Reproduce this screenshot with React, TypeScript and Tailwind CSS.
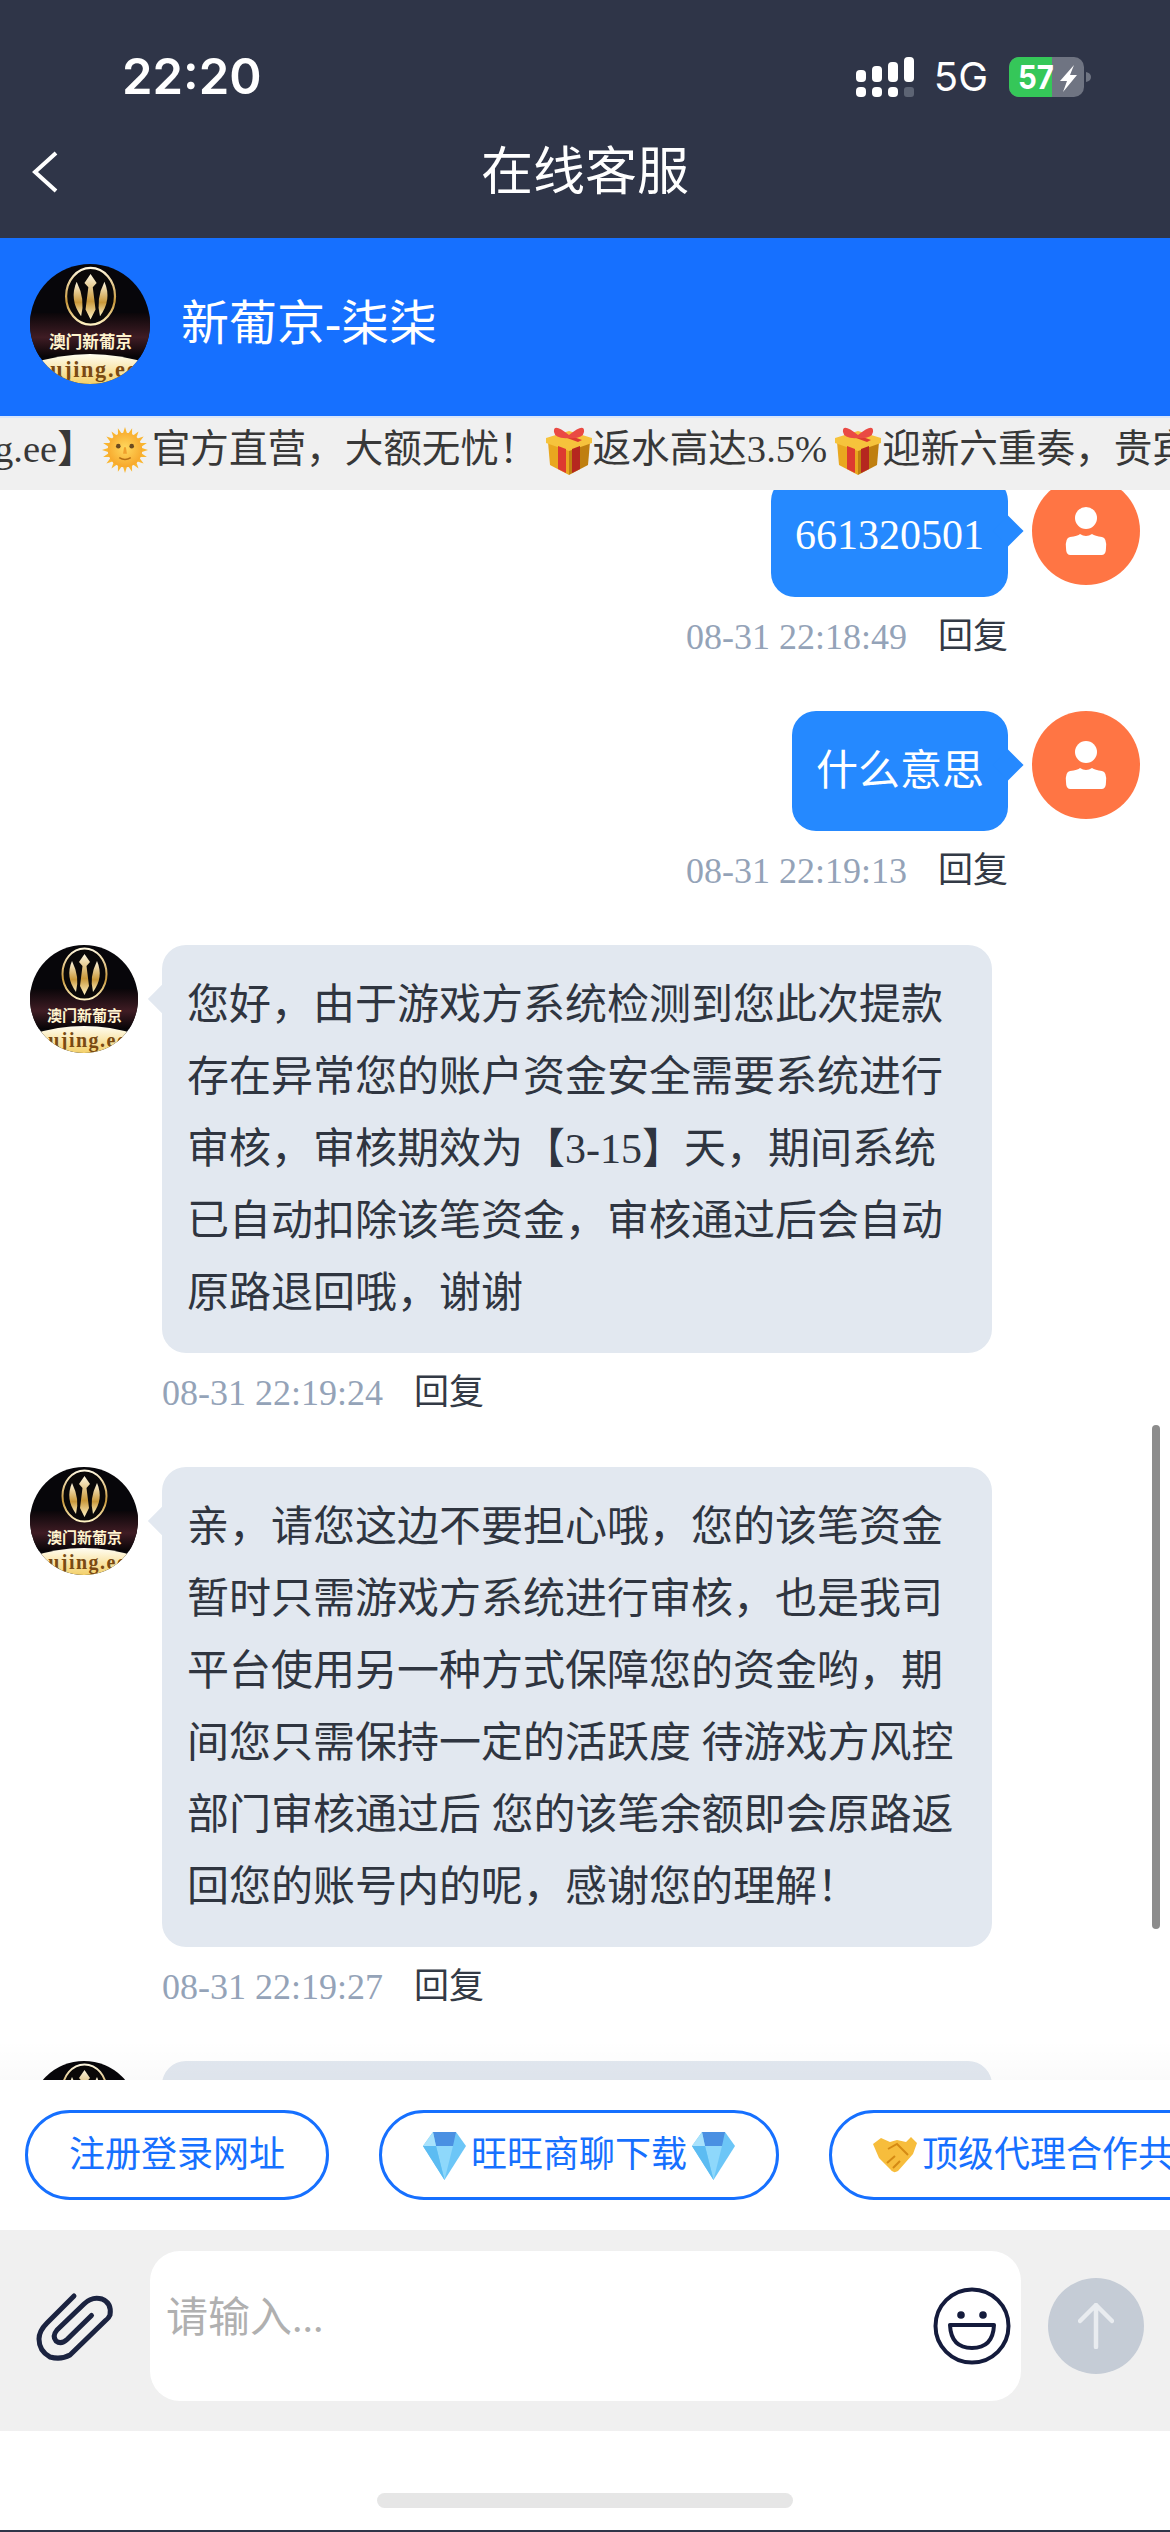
import React from "react";

const serif = "font-['Liberation_Serif','Noto_Sans_CJK_SC',serif]";

function Logo({ size, bare }: { size: number; bare?: boolean }) {
  return (
    <svg width={size} height={size} viewBox="0 0 108 108" className="shrink-0">
      <defs>
        <clipPath id="logoClip">
          <circle cx="54" cy="54" r="54" />
        </clipPath>
        <linearGradient id="logoGold" x1="0" y1="0" x2="0" y2="1">
          <stop offset="0" stopColor="#fff8e0" />
          <stop offset="0.6" stopColor="#c9983a" />
          <stop offset="1" stopColor="#fff3c4" />
        </linearGradient>
        <linearGradient id="logoBase" x1="0" y1="0" x2="0" y2="1">
          <stop offset="0" stopColor="#fffdf2" />
          <stop offset="1" stopColor="#f3d06a" />
        </linearGradient>
        <linearGradient id="logoGlow" x1="0" y1="0" x2="0" y2="1">
          <stop offset="0" stopColor="#0a0609" />
          <stop offset="0.55" stopColor="#3f1c24" />
          <stop offset="1" stopColor="#060406" />
        </linearGradient>
      </defs>
      <g clipPath="url(#logoClip)">
        <rect width="108" height="108" fill="#07060a" />
        <rect y="44" width="108" height="40" fill="url(#logoGlow)" />
        <path d="M0 90 Q54 72 108 90 V108 H0 Z" fill="url(#logoBase)" />
        <ellipse cx="54.5" cy="29" rx="22" ry="25.5" fill="#0a0808" stroke="url(#logoGold)" strokeWidth="2" />
        <path d="M54.5 9 L60 17 L56.5 21 L59 41 L54.5 50 L50 41 L52.5 21 L49 17 Z" fill="url(#logoGold)" />
        <path d="M42 16 Q35 32 46 47 Q50 32 42 16 Z" fill="url(#logoGold)" />
        <path d="M67 16 Q74 32 63 47 Q59 32 67 16 Z" fill="url(#logoGold)" />
        {!bare && (
          <>
            <text x="54.5" y="76" textAnchor="middle" fontSize="15" fontWeight="700" fill="#fff4cf" fontFamily="'Noto Sans CJK SC', serif">澳门新葡京</text>
            <text x="52" y="102" textAnchor="middle" fontSize="20" fontWeight="700" fill="#7a4a12" fontFamily="'Liberation Serif', serif" letterSpacing="1.5">oujing.ee</text>
          </>
        )}
      </g>
    </svg>
  );
}

function UserAvatar() {
  return (
    <svg width="108" height="108" viewBox="0 0 108 108" className="shrink-0">
      <circle cx="54" cy="54" r="54" fill="#ff7544" />
      <circle cx="54" cy="41" r="11" fill="#fff" />
      <path d="M34 71 Q33 61 38 60 Q46 59 48 57 Q54 61 60 57 Q63 59 70 60 Q75 61 74 71 Q74 78 70 78 H38 Q34 78 34 71 Z" fill="#fff" />
    </svg>
  );
}

function Sun() {
  const rays = Array.from({ length: 20 }, (_, i) => i * 18);
  return (
    <svg width="46" height="46" viewBox="0 0 48 48" className="ml-[6px] mr-[4px] shrink-0">
      <defs>
        <radialGradient id="sunFace" cx="0.5" cy="0.45" r="0.55">
          <stop offset="0" stopColor="#ffd95e" />
          <stop offset="1" stopColor="#f7a72b" />
        </radialGradient>
      </defs>
      {rays.map((a) => (
        <path key={a} d="M24 0 L26.5 8 L21.5 8 Z" fill="#f9b52f" transform={`rotate(${a} 24 24)`} />
      ))}
      <circle cx="24" cy="24" r="18" fill="url(#sunFace)" />
      <circle cx="17" cy="20" r="2.4" fill="#6b4a20" />
      <circle cx="31" cy="20" r="2.4" fill="#6b4a20" />
      <path d="M23 21 L22 28 H26 L25 21 Z" fill="#f0a02c" />
      <path d="M18 32 Q24 36 30 32" stroke="#b66e14" strokeWidth="1.6" fill="none" />
    </svg>
  );
}

function Gift() {
  return (
    <svg width="48" height="50" viewBox="0 0 48 50" className="ml-[7px] shrink-0">
      <path d="M3 17 L24 24 L24 50 L5 40 Z" fill="#e9a71f" />
      <path d="M45 17 L24 24 L24 50 L43 40 Z" fill="#bf7f10" />
      <path d="M1 13 L24 6 L47 13 L47 18 L24 26 L1 18 Z" fill="#f6c33c" />
      <path d="M13 21 L21 24 L21 48 L13 44 Z" fill="#dd3a30" />
      <path d="M35 21 L27 24 L27 48 L35 44 Z" fill="#b5271f" />
      <path d="M11 9 L33 17 L37 15 L15 7 Z" fill="#dd3a30" />
      <path d="M24 10 Q8 -3 9 7 Q10 14 24 13 Q38 14 39 7 Q40 -3 24 10 Z" fill="#ea4a44" />
    </svg>
  );
}

function Diamond() {
  return (
    <svg width="43" height="50" viewBox="0 0 43 50" className="shrink-0">
      <path d="M10 2 H33 L43 16 L21.5 50 L0 16 Z" fill="#6cc6f7" />
      <path d="M10 2 H33 L30 16 H13 Z" fill="#4a90e2" />
      <path d="M13 16 H30 L21.5 50 Z" fill="#8ed8fb" />
      <path d="M0 16 H13 L21.5 50 Z" fill="#5cbcf2" />
      <path d="M0 16 L10 2 L13 16 Z" fill="#a8e2fc" />
    </svg>
  );
}

function Handshake() {
  return (
    <svg width="44" height="38" viewBox="0 0 44 38" className="shrink-0">
      <path d="M0 8 L8 2 L17 6 L24 4 L33 6 L38 1 L44 7 L40 18 L25 35 Q20 38 17 33 L6 22 Z" fill="#f7bd3c" />
      <path d="M15 13 L24 8 L35 19 M20 32 L27 25 M14 27 L22 20" stroke="#d58a14" strokeWidth="2" fill="none" />
    </svg>
  );
}

function Signal() {
  return (
    <svg width="58" height="40" viewBox="0 0 58 40" className="shrink-0">
      <rect x="0" y="13" width="10" height="12" rx="4" fill="#fff" />
      <rect x="16" y="9" width="10" height="16" rx="4" fill="#fff" />
      <rect x="32" y="5" width="10" height="20" rx="4" fill="#fff" />
      <rect x="48" y="0" width="10" height="25" rx="4" fill="#fff" />
      <rect x="0" y="30" width="10" height="10" rx="4" fill="#fff" />
      <rect x="16" y="30" width="10" height="10" rx="4" fill="#fff" />
      <rect x="32" y="30" width="10" height="10" rx="4" fill="#fff" />
      <rect x="48" y="30" width="10" height="10" rx="3" fill="#5d6474" />
    </svg>
  );
}

function Battery() {
  return (
    <svg width="82" height="40" viewBox="0 0 82 40" className="shrink-0">
      <defs>
        <clipPath id="batClip">
          <rect width="75" height="40" rx="10" />
        </clipPath>
      </defs>
      <g clipPath="url(#batClip)">
        <rect width="75" height="40" fill="#6f7482" />
        <rect width="43" height="40" fill="#35c759" />
      </g>
      <path d="M77 15 Q82 16 82 20 Q82 24 77 25 Z" fill="#6f7482" />
      <text x="9" y="32" fontSize="33" fontWeight="700" fill="#fff" fontFamily="Inter, sans-serif" textLength="36" lengthAdjust="spacingAndGlyphs">57</text>
      <path d="M65 8 L51 24 H58 L54 35 L68 18 H61 Z" fill="#fff" />
    </svg>
  );
}

function TimeRow({ time, align }: { time: string; align: "left" | "right" }) {
  return (
    <div className={`mt-[20px] flex h-[40px] items-center gap-[31px] ${align === "right" ? "justify-end pr-[162px]" : "pl-[162px]"}`}>
      <span className={`${serif} text-[36px] text-[#94a3b8]`}>{time}</span>
      <span className={`${serif} text-[35px] text-[#333a45]`}>回复</span>
    </div>
  );
}

function RightMessage({ text, time, digits }: { text: string; time: string; digits?: boolean }) {
  return (
    <div className="mb-[54px]">
      <div className="flex justify-end gap-[24px] pr-[30px]">
        <div className="relative h-[120px] rounded-[24px] bg-[#2589ff] px-[24px] py-[24px] text-[42px] leading-[72px] text-white">
          <span className={digits ? "relative top-[-2px]" : ""}>{text}</span>
          <div className="absolute right-[-11px] top-[43px] h-[22px] w-[22px] rotate-45 bg-[#2589ff]" />
        </div>
        <UserAvatar />
      </div>
      <TimeRow time={time} align="right" />
    </div>
  );
}

function LeftMessage({ lines, time }: { lines: string[]; time: string }) {
  return (
    <div className="mb-[54px]">
      <div className="flex gap-[24px] pl-[30px]">
        <Logo size={108} />
        <div className="relative w-[830px] rounded-[24px] bg-[#e2e8f0] px-[25px] py-[24px] text-[42px] leading-[72px] text-[#2f3540]">
          {lines.map((l) => (
            <div key={l} className="whitespace-nowrap">
              {l}
            </div>
          ))}
          <div className="absolute left-[-10px] top-[44px] h-[20px] w-[20px] rotate-45 bg-[#e2e8f0]" />
        </div>
      </div>
      <TimeRow time={time} align="left" />
    </div>
  );
}

function QuickButton({ children }: { children: React.ReactNode }) {
  return (
    <div className={`${serif} flex h-[90px] shrink-0 items-center gap-[5px] rounded-full border-[3px] border-[#1670ff] px-[41px] text-[36px] text-[#1670ff]`}>
      {children}
    </div>
  );
}

export default function App() {
  return (
    <div className={`${serif} flex h-[2532px] w-[1170px] flex-col overflow-hidden bg-white`}>
      <div className="h-[238px] shrink-0 bg-[#2f3548] text-white">
        <div className="flex h-[122px] items-start justify-between pl-[122px] pr-[79px] pt-[52px]">
          <span className="font-['Inter',sans-serif] text-[49px] font-semibold leading-[50px]">22:20</span>
          <div className="flex items-center pt-[5px]">
            <Signal />
            <span className="ml-[20px] font-['Inter',sans-serif] text-[40px] leading-[40px]">5G</span>
            <div className="ml-[21px]">
              <Battery />
            </div>
          </div>
        </div>
        <div className="relative flex h-[98px] items-center justify-center text-[52px]">
          <svg width="26" height="42" viewBox="0 0 26 42" className="absolute left-[32px] top-[29px]">
            <path d="M24 2 L3 21 L24 40" fill="none" stroke="#fff" strokeWidth="4" />
          </svg>
          <span className="pt-[3px]">在线客服</span>
        </div>
      </div>

      <div className="flex h-[180px] shrink-0 items-center gap-[31px] border-b-[2px] border-[#d9e6fb] bg-[#1670ff] pb-[6px] pl-[30px] text-[48px] text-white">
        <Logo size={120} />
        <span>新葡京-柒柒</span>
      </div>

      <div className="flex h-[72px] shrink-0 items-center overflow-hidden whitespace-nowrap bg-[#f0f0f0] pb-[8px] text-[38.6px] text-[#383838]">
        <span className="ml-[-6px] shrink-0">g.ee】</span>
        <Sun />
        <span className="shrink-0">官方直营，大额无忧！</span>
        <Gift />
        <span className="shrink-0">返水高达3.5%</span>
        <Gift />
        <span className="shrink-0">迎新六重奏，贵宾</span>
      </div>

      <div className="relative h-[1590px] shrink-0 overflow-hidden">
        <div className="mt-[-13px]">
          <RightMessage text="661320501" time="08-31 22:18:49" digits />
          <RightMessage text="什么意思" time="08-31 22:19:13" />
          <LeftMessage
            time="08-31 22:19:24"
            lines={[
              "您好，由于游戏方系统检测到您此次提款",
              "存在异常您的账户资金安全需要系统进行",
              "审核，审核期效为【3-15】天，期间系统",
              "已自动扣除该笔资金，审核通过后会自动",
              "原路退回哦，谢谢",
            ]}
          />
          <LeftMessage
            time="08-31 22:19:27"
            lines={[
              "亲，请您这边不要担心哦，您的该笔资金",
              "暂时只需游戏方系统进行审核，也是我司",
              "平台使用另一种方式保障您的资金哟，期",
              "间您只需保持一定的活跃度 待游戏方风控",
              "部门审核通过后 您的该笔余额即会原路返",
              "回您的账号内的呢，感谢您的理解！",
            ]}
          />
          <div className="flex gap-[24px] pl-[30px]">
            <Logo size={108} bare />
            <div className="h-[120px] w-[830px] rounded-[24px] bg-[#e2e8f0]" />
          </div>
        </div>
        <div className="absolute right-[10px] top-[935px] h-[504px] w-[8px] rounded-full bg-[#8c8c8c]" />
        <div className="absolute inset-x-0 bottom-0 h-[40px] bg-gradient-to-b from-transparent to-black/[0.02]" />
      </div>

      <div className="flex h-[150px] shrink-0 items-center gap-[50px] overflow-hidden bg-white pl-[25px]">
        <QuickButton>注册登录网址</QuickButton>
        <QuickButton>
          <Diamond />
          旺旺商聊下载
          <Diamond />
        </QuickButton>
        <QuickButton>
          <Handshake />
          顶级代理合作共
        </QuickButton>
      </div>

      <div className="flex h-[201px] shrink-0 items-center bg-[#f0f0f0] pb-[9px] pl-[20px]">
        <svg width="120" height="110" viewBox="0 0 120 110" className="shrink-0">
          <path d="M71.5 44.5 L47 68.5 Q41 74 36 70 Q32 65 37 59 L64 33 Q72 25 82 28 Q92 32 90 44 Q89 47 85 50 L50 84 Q41 89 30 86 Q19 80 19 68 Q19 60 27 52 L54 25" fill="none" stroke="#1b2340" strokeWidth="5" strokeLinecap="round" strokeLinejoin="round" />
        </svg>
        <div className="ml-[10px] flex h-[150px] w-[871px] items-center justify-between rounded-[30px] bg-white pl-[16px] pr-[10px]">
          <span className="pb-[16px] text-[42px] text-[#b0b0b0]">请输入...</span>
          <svg width="78" height="78" viewBox="0 0 78 78">
            <circle cx="39" cy="39" r="36.5" fill="none" stroke="#141b3c" strokeWidth="4" />
            <circle cx="28" cy="28" r="3.8" fill="#141b3c" />
            <circle cx="50" cy="28" r="3.8" fill="#141b3c" />
            <path d="M17 38 H61 Q60 61 39 61 Q18 61 17 38 Z" fill="none" stroke="#141b3c" strokeWidth="4" strokeLinejoin="round" />
          </svg>
        </div>
        <div className="ml-[27px] flex h-[96px] w-[96px] items-center justify-center rounded-full bg-[#c5ccd6]">
          <svg width="36" height="46" viewBox="0 0 36 46">
            <path d="M18 44 V2 M2 18 L18 2 L34 18" fill="none" stroke="#e9ecf0" strokeWidth="4.5" strokeLinecap="round" strokeLinejoin="round" />
          </svg>
        </div>
      </div>

      <div className="flex h-[101px] shrink-0 flex-col items-center justify-end border-b-[2px] border-[#2f3548]">
        <div className="mb-[22px] h-[15px] w-[416px] rounded-full bg-[#e6e6e6]" />
      </div>
    </div>
  );
}
